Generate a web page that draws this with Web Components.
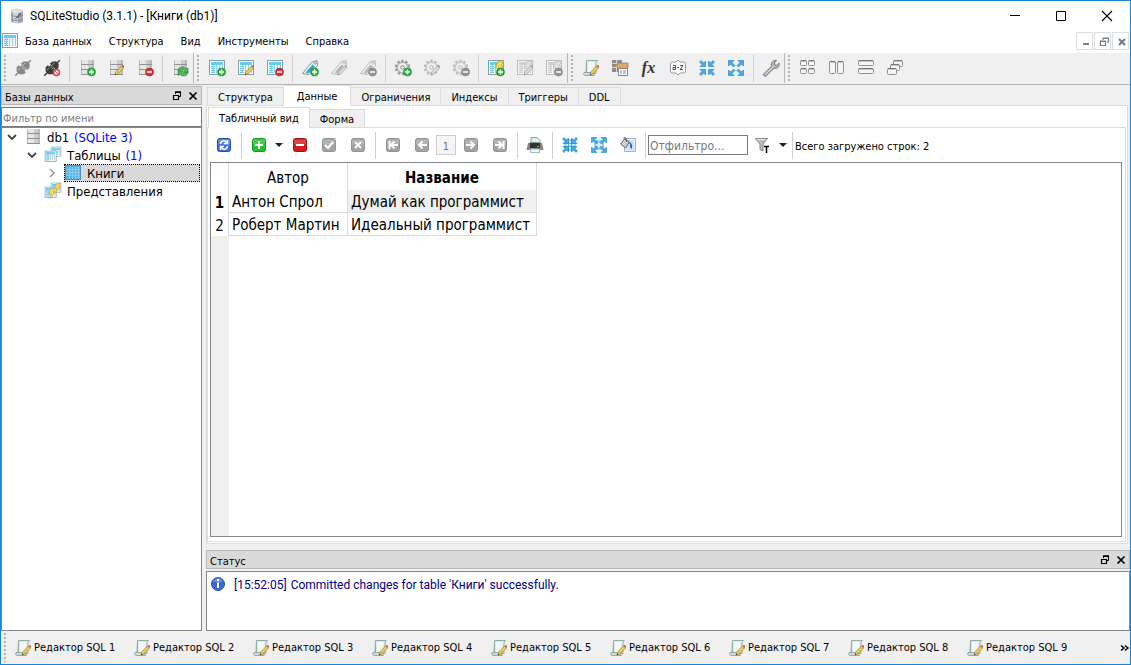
<!DOCTYPE html>
<html lang="ru">
<head>
<meta charset="utf-8">
<title>SQLiteStudio (3.1.1) - [Книги (db1)]</title>
<style>
  html, body { margin: 0; height: 100%; }
  body {
    --face: #f0f0f0;
    --line: #dcdcdc;
    --frame: #828790;
    font: 11px/14px "DejaVu Sans Condensed", "DejaVu Sans", sans-serif;
    color: #000;
    background: var(--face);
    overflow: hidden;
  }
</style>
</head>
<body>
<studio-window></studio-window>

<script>
/* ---------- base ---------- */
function define(name, html, init) {
  const template = document.createElement('template');
  template.innerHTML = html;
  customElements.define(name, class extends HTMLElement {
    constructor() {
      super();
      this.attachShadow({ mode: 'open' }).append(template.content.cloneNode(true));
    }
    connectedCallback() { if (init) init(this, this.shadowRoot); }
  });
}

/* ---------- icons, 18x18 grid ---------- */
const DISK = y => `<rect x="3" y="${y}" width="13" height="5" rx="1" fill="#b9b9b9"/><rect x="4" y="${y}" width="6" height="4" fill="#e6e6e6"/><rect x="10" y="${y}" width="4" height="4" fill="#cbcbcb"/><rect x="3" y="${y + 4}" width="13" height="1" fill="#929292"/>`;
const DB = DISK(1) + DISK(6) + DISK(11);
const TABLE = `<rect x="1.500" y="1.500" width="15" height="14" fill="#fff" stroke="#8aa0a4"/><rect x="3" y="3" width="12" height="11" fill="#e2f3fa"/><path d="M3 3h12v3H3z" fill="#62cdf8"/><path d="M3 3h4v11H3z" fill="#62cdf8"/><path d="M3 6.500h12M3 8.500h12M3 10.500h12M3 12.500h12" stroke="#fff" stroke-width=".7"/><path d="M5.500 6v8M8.500 6v8M11.500 6v8M14.500 6v8" stroke="#9cc6d9" stroke-width=".9"/>`;
const BOLT = `<path d="M11 2h6l-3 5h3l-8 9 2-7H8z" fill="#f6d955" stroke="#b99a35" stroke-width=".7"/>`;
const TAG = `<path d="M1.500 14.500 11 3l5-1.500.5 5L8 15.500z" fill="#f6f6f6" stroke="#8b9499"/><path d="m4.500 13.500 7-8 2.500 2-6.500 7z" fill="#34a5e0"/><circle cx="14" cy="4" r="1.200" fill="#fff" stroke="#777" stroke-width=".7"/>`;
const GEAR = `<circle cx="8.500" cy="8.500" r="6.500" fill="none" stroke="#9b9b9b" stroke-width="2.500" stroke-dasharray="2.400 1.684"/><circle cx="8.500" cy="8.500" r="5.500" fill="#dedede" stroke="#9a9a9a"/><circle cx="8.500" cy="8.500" r="3.500" fill="none" stroke="#f8f8f8"/><circle cx="8.500" cy="8.500" r="1.700" fill="#f7f7f7" stroke="#8f8f8f"/>`;
const SHEET = `<path d="M4.500 1.500h11q-1.500 1-1.500 3v10H4z" fill="#dcecea" stroke="#94aca9"/><path d="M6 3h6.500v10H6z" fill="#f0f9f7"/><path d="M4.500 2v10l-1 2" fill="none" stroke="#94aca9"/><path d="M3 13.500h9q-1 1.500.5 3H3q-2.500-1-1-3z" fill="#cadfdc" stroke="#819b98" stroke-width=".8"/>`;
const PLUG = c => `<g transform="rotate(-45 9 9)"><path d="M-2 9h22" stroke="${c}" stroke-width="1.500"/><path d="M2 7l3-3h3v10H5l-3-3zM10.500 4.500h3l3 2.500v4l-3 2.500h-3zM8 6h2v2H8zM8 10h2v2H8z" fill="${c}"/><path d="M4 7h3M11.500 7h3" stroke="#fff" opacity=".4"/></g>`;
const KEY = (a, b, g) => `<rect x="2.500" y="2.500" width="13" height="13" rx="2" fill="${a}" stroke="${b}"/><path d="M3 3.500h12v5H3z" fill="#fff" opacity=".18"/>${g}`;
const stroke = d => `<path d="${d}" fill="none" stroke="#fff" stroke-width="2"/>`;
const GRAY = d => KEY('#a3a3a3', '#929292', stroke(d));
const ARROWS = d => `<path d="${d}" fill="#45aceb" stroke="#2380c0" stroke-width=".6"/>`;
const IN = 'M1.500 3 3 1.500l2.500 2.500L7.500 2v5.500H2L4 5.500zM16.500 3 15 1.500 12.500 4l-2-2v5.500H16l-2-2zM1.500 15 3 16.500 5.500 14l2 2v-5.500H2l2 2zM16.500 15 15 16.500 12.500 14l-2 2v-5.500H16l-2 2z';
const OUT = 'M1.500 1.500H7L5 3.500l3 3L6.500 8l-3-3-2 2zM16.500 1.500H11l2 2-3 3L11.500 8l3-3 2 2zM1.500 16.500H7l-2-2 3-3L6.500 10l-3 3-2-2zM16.500 16.500H11l2-2-3-3 1.500-1.500 3 3 2-2z';
const PANE = (x, y, w, h) => `<rect x="${x}.5" y="${y}.5" width="${w}" height="${h}" rx="1" fill="#f5f5f5" stroke="#929292"/><path d="M${x + 1} ${y + 1}.5h${w - 1}" stroke="#c4c4c4"/><path d="M${x + 1} ${y}.5h${w - 1}" stroke="#777"/>`;
const STACK = `<g transform="translate(6 0) scale(.66)">${TABLE}</g><g transform="translate(0 4) scale(.74)">${TABLE}</g>`;
const ICONS = {
  app: `<path d="M3 4c0-3 12-3 12 0v10c0 3-12 3-12 0z" fill="#a3a9b4"/><path d="M5 2h5v14H5z" fill="#cdd1d8"/><ellipse cx="9" cy="4" rx="6" ry="2" fill="#dde0e5"/><path d="M3 8c2 2 10 2 12 0M3 12c2 2 10 2 12 0" fill="none" stroke="#8b919d"/><path d="m4 15 9-10c1 3-3 6-6 7z" fill="#5b6474"/>`,
  plug: PLUG('#868686'),
  unplug: PLUG('#3b3b3b') + `<circle cx="13.500" cy="13.500" r="3" fill="#fbe9e9" stroke="#d24545" stroke-width="1.500"/><path d="m11.500 11.500 4 4" stroke="#d24545"/>`,
  db: DB, table: TABLE,
  tableblue: `<rect x="1.500" y="1.500" width="15" height="14" fill="#5ab4e6" stroke="#4a8fb5"/><path d="M5.500 3v12M8.500 3v12M11.500 3v12M14.500 3v12M2 5.500h14M2 8.500h14M2 11.500h14" stroke="#8acdf0"/>`,
  tables: STACK,
  views: STACK + `<g transform="translate(5 0) scale(.7)">${BOLT}</g><g transform="translate(-1 5) scale(.72)">${BOLT}</g>`,
  tag: TAG, gear: GEAR, view: TABLE + BOLT, sheet: SHEET,
  dbrefresh: DB + `<path d="M7 11.500c0-4.500 7-4.500 8-1.500l2-1v4.500h-5l1.500-1.500c-1-2-3.500-1.500-3.500-.5zM17 13c0 5-7 5-8 2l-2 1.500V12h5l-1.500 1.500c1 2 3.500 1.500 3.500-.5z" fill="#4cc05a" stroke="#23832f" stroke-width=".6"/>`,
  history: `<path d="M1 1h10v12H1z" fill="#8d8d8d"/><path d="M1 4.500h10M1 8.500h10M5.500 1v12" stroke="#d4d4d4"/><path d="M5 5.500 9 4h8v5l-5 1.500-2-1.500-3 1z" fill="#e2a767" stroke="#a4713a" stroke-width=".7"/><rect x="7.500" y="9.500" width="9" height="7" fill="#fff" stroke="#888"/><path d="M9 12h2m1 0h3M9 14h2m1 0h3" stroke="#888"/>`,
  az: `<path d="M3.500 3H7l2-2 2 2h3.500q2 0 2 2v7q0 2-2 2H11l-2 2-2-2H3.500q-2 0-2-2V5q0-2 2-2z" fill="#fafafa" stroke="#999"/><path d="M4 6.500h2.500v4H4V8.500h2.500M8 8.500h2M11 6.500h3l-3 4h3" fill="none" stroke="#555"/>`,
  inward: ARROWS(IN), outward: ARROWS(OUT),
  gridin: `<path d="M4 4h10v10H4z" fill="#cfeefb" stroke="#47a9dc"/><path d="M4 7.500h10M4 10.500h10M7.500 4v10M10.500 4v10" stroke="#47a9dc"/>` + ARROWS(IN),
  gridout: `<path d="M5 5h8v8H5z" fill="#cfeefb" stroke="#47a9dc"/>` + ARROWS(OUT),
  wrench: `<path d="M1.500 15 9.500 7.500c-1-3 1-6.500 5-6L12.500 4l.5 2 2 .5L17 4c1 4-2 6-5 5.200L4 17c-1 1-3.500-1-2.500-2z" fill="#b4b4b4" stroke="#7b7b7b"/><path d="m3.500 15 8-7.500" stroke="#e6e6e6"/>`,
  tile: PANE(1, 1, 6, 5) + PANE(9, 1, 6, 5) + PANE(1, 9, 6, 5) + PANE(9, 9, 6, 5),
  cols: PANE(1, 2, 6, 12) + PANE(9, 2, 6, 12),
  rows: PANE(1, 1, 15, 5) + PANE(1, 9, 15, 5),
  cascade: PANE(7, 1, 9, 6) + PANE(4, 5, 9, 6) + PANE(1, 9, 9, 6),
  refresh: KEY('#3f6fe0', '#2450b5', `<path d="M5.500 8c.5-4 5-4 6-1.500M12.500 4v3.500H9M12.500 10c-.5 4-5 4-6 1.500M5.500 14v-3.500H9" fill="none" stroke="#fff" stroke-width="1.500"/>`),
  plus: KEY('#1fc32d', '#17962a', stroke('M9 5v8M5 9h8')),
  minus: KEY('#d01c1c', '#a01212', stroke('M5 9h8')),
  check: GRAY('m5 9 3 3 5-6'), cross: GRAY('m6 6 6 6M12 6l-6 6'),
  first: GRAY('M5.500 5v8M14 9H8M10.500 5.500 7 9l3.500 3.500'),
  prev: GRAY('M14 9H6M9.500 5.500 6 9l3.500 3.500'),
  next: GRAY('M4 9h8M8.500 5.500 12 9l-3.500 3.500'),
  last: GRAY('M12.500 5v8M4 9h6M7.500 5.500 11 9l-3.500 3.500'),
  print: `<path d="M5 8V1.500h6l3 3V8" fill="#dcefe2" stroke="#8aa595"/><path d="M2 7q7-2 14 0l1.500 7h-17z" fill="#858585"/><path d="M4 7h10v5H4z" fill="#333"/><path d="M11 10.500h2" stroke="#54d54c"/><path d="M4.500 13h9v3.500h-9z" fill="#eef6fc" stroke="#8fa6b8" stroke-width=".8"/>`,
  fill: `<path d="M5.500 2.500h11v13h-11z" fill="#e4f0f9" stroke="#9db6c6"/><path d="M7 4h8v10H7z" fill="#cfe3f3"/><path d="m1.500 8 4-5 5 3-4 6z" fill="#cdcdcd" stroke="#666"/><path d="M4.500 2q3-2 3 4" fill="none" stroke="#555"/><path d="M9 6q5 0 4 7-2.500-1-2-5z" fill="#2c62bd"/>`,
  funnel: `<path d="M1.500 2.500h12L9 8v7l-3-1.500V8z" fill="#bcbcbc" stroke="#868686"/><path d="M3 3.500h9" stroke="#eee"/><path d="M10 10.500h5M12.500 10.500V17" stroke="#000" stroke-width="1.500"/>`,
  info: `<circle cx="9" cy="9" r="6.500" fill="#3868d2" stroke="#2f56ad"/><path d="M4 6q5-6 10 0-5 3-10 0z" fill="#fff" opacity=".25"/><path d="M9 4v2M9 7.500V13" stroke="#fff" stroke-width="2"/>`,
  down: `<path d="M5 7h8l-4 4z" fill="#222"/>`,
  more: `<path d="m5 6.500 3 2.500-3 2.500M9 6.500l3 2.500-3 2.500" fill="none" stroke="#000" stroke-width="1.500"/>`,
  open: `<path d="m5 7 4 4 4-4" fill="none" stroke="#444" stroke-width="1.800"/>`,
  closed: `<path d="m7 5 4 4-4 4" fill="none" stroke="#999" stroke-width="1.600"/>`,
  float: `<path d="M7.500 7V5.500h5v4H11M7 5.500h6" fill="none" stroke="#000"/><path d="M5.500 8.500h5v4h-5zM5 8.500h6" fill="none" stroke="#000" stroke-width="1.200"/><path d="M7 5h6" stroke="#000" stroke-width="1.500"/>`,
  close: `<path d="m5.500 5.500 7 7M12.500 5.500l-7 7" stroke="#000" stroke-width="1.700"/>`,
  winmin: `<path d="M4 8.500h10" stroke="#000"/>`,
  winmax: `<path d="M4.500 4.500h9v9h-9z" fill="none" stroke="#000"/>`,
  winclose: `<path d="m4 4 10 10M14 4 4 14" stroke="#000" stroke-width="1.100"/>`,
  submin: `<path d="M6 11h6" stroke="#6f7f8f" stroke-width="2"/>`,
  subfloat: `<path d="M8 7V5.500h5.500V9H12M5.500 8.500h5v4h-5zM5 8h6M8 5h6" fill="none" stroke="#6f7f8f" stroke-width="1.200"/>`,
  subclose: `<path d="m6 6 6 6M12 6l-6 6" stroke="#6f7f8f" stroke-width="2.200"/>`
};
const BADGES = {
  add: `<circle cx="13.500" cy="13" r="4" fill="#2eb043" stroke="#1a8230" stroke-width=".6"/><path d="M13.500 10.500v5M11 13h5" stroke="#fff" stroke-width="1.500"/>`,
  del: `<circle cx="13.500" cy="13" r="4" fill="#d13338" stroke="#a01c22" stroke-width=".6"/><path d="M11 13h5" stroke="#fff" stroke-width="1.600"/>`,
  edit: `<path d="m8 16 .8-3 5.700-6 2 2-5.700 6z" fill="#f1cf54" stroke="#94772b" stroke-width=".7"/><path d="m14.500 7 1-1q2 0 1.500 2l-.5 1z" fill="#d65656"/><path d="m8 16 .4-1.400 1 .9z" fill="#222"/>`
};
define('ui-icon', `<style>
  :host { display: block; width: 18px; height: 18px; flex: none; }
  :host([off]) { filter: grayscale(1); opacity: .6; }
  svg { display: block; }
</style><svg width="18" height="18" viewBox="0 0 18 18" aria-hidden="true"></svg>`, (el, root) => {
  root.querySelector('svg').innerHTML = (ICONS[el.getAttribute('name')] || '') + (BADGES[el.getAttribute('badge')] || '');
});

/* ---------- buttons and bars ---------- */
define('tool-button', `<style>
  :host { display: block; width: 29px; flex: none; }
  :host([narrow]) { width: 12px; }
  button { width: 100%; height: 28px; padding: 0; border: 0; background: none; font: italic 700 16px/28px "Liberation Serif", serif; color: #333;
    display: flex; align-items: center; justify-content: center; }
</style><button type="button"><slot></slot></button>`, (el, root) => {
  const name = el.getAttribute('icon');
  root.querySelector('button').setAttribute('aria-label', el.getAttribute('label') || name);
  if (!name) return;
  const icon = document.createElement('ui-icon');
  icon.setAttribute('name', name);
  if (el.hasAttribute('badge')) icon.setAttribute('badge', el.getAttribute('badge'));
  icon.toggleAttribute('off', el.hasAttribute('off'));
  root.querySelector('slot').replaceWith(icon);
});
define('bar-gap', `<style>
  :host { display: block; width: 6px; height: 27px; flex: none; }
  i { display: block; width: 1px; height: 100%; margin-left: 3px; background: #cfcfcf; }
</style><i></i>`);
define('tool-bar', `<style>
  :host { display: flex; align-items: center; align-self: stretch; flex: none; position: relative; padding-left: 8px; box-shadow: inset -1px 0 #b8b8b8; }
  :host(:first-of-type) { padding-left: 7px; }
  :host([open]) { box-shadow: none; }
  :host::before { content: ""; position: absolute; left: 3px; top: 2px; bottom: 2px; width: 2px;
    background: repeating-linear-gradient(#b4b4b4 0 2px, transparent 2px 4px); }
</style><slot></slot>`);

define('title-bar', `<style>
  :host { display: flex; align-items: center; height: 29px; padding-left: 7px; background: #fff; font: 12px/16px Roboto, sans-serif; }
  span { flex: 1; margin-left: 4px; }
  button { width: 46px; height: 28px; padding: 0; border: 0; background: none; display: grid; place-items: center; }
</style><ui-icon name="app"></ui-icon><span><slot></slot></span>
<button aria-label="Свернуть"><ui-icon name="winmin"></ui-icon></button>
<button aria-label="Развернуть"><ui-icon name="winmax"></ui-icon></button>
<button aria-label="Закрыть"><ui-icon name="winclose"></ui-icon></button>`);

define('menu-bar', `<style>
  :host { display: flex; align-items: center; height: 22px; background: #fff; }
  nav { flex: 1; display: flex; gap: 1px; margin-left: -2px; }
  nav button { font: inherit; color: inherit; border: 0; background: none; padding: 2px 8px 0; }
  .sub { box-sizing: border-box; width: 17px; height: 18px; margin-right: 1px; padding: 0; border: 1px solid #dedede; background: #fff; display: grid; place-items: center; }
</style><ui-icon name="table"></ui-icon>
<nav><button>База данных</button><button>Структура</button><button>Вид</button><button>Инструменты</button><button>Справка</button></nav>
<button class="sub" aria-label="Свернуть вкладку"><ui-icon name="submin"></ui-icon></button>
<button class="sub" aria-label="Восстановить вкладку"><ui-icon name="subfloat"></ui-icon></button>
<button class="sub" aria-label="Закрыть вкладку"><ui-icon name="subclose"></ui-icon></button>`);

define('main-toolbar', `<style>
  :host { display: flex; box-sizing: border-box; height: 33px; padding-bottom: 1px; border-top: 1px solid #fff; border-bottom: 1px solid #b4b4b4; background: var(--face); }
</style>
<tool-bar>
  <tool-button icon="plug" label="Подключиться"></tool-button><tool-button icon="unplug" label="Отключиться"></tool-button><bar-gap></bar-gap>
  <tool-button icon="db" badge="add" label="Добавить базу"></tool-button><tool-button icon="db" badge="edit" label="Изменить базу"></tool-button><tool-button icon="db" badge="del" label="Удалить базу"></tool-button><bar-gap></bar-gap>
  <tool-button icon="dbrefresh" label="Обновить схемы"></tool-button>
</tool-bar>
<tool-bar>
  <tool-button icon="table" badge="add" label="Создать таблицу"></tool-button><tool-button icon="table" badge="edit" label="Изменить таблицу"></tool-button><tool-button icon="table" badge="del" label="Удалить таблицу"></tool-button><bar-gap></bar-gap>
  <tool-button icon="tag" badge="add" label="Создать индекс"></tool-button><tool-button icon="tag" badge="edit" off label="Изменить индекс"></tool-button><tool-button icon="tag" badge="del" off label="Удалить индекс"></tool-button><bar-gap></bar-gap>
  <tool-button icon="gear" badge="add" label="Создать триггер"></tool-button><tool-button icon="gear" badge="edit" off label="Изменить триггер"></tool-button><tool-button icon="gear" badge="del" off label="Удалить триггер"></tool-button><bar-gap></bar-gap>
  <tool-button icon="view" badge="add" label="Создать представление"></tool-button><tool-button icon="view" badge="edit" off label="Изменить представление"></tool-button><tool-button icon="view" badge="del" off label="Удалить представление"></tool-button>
</tool-bar>
<tool-bar>
  <tool-button icon="sheet" badge="edit" label="Редактор SQL"></tool-button><tool-button icon="history" label="История"></tool-button><tool-button label="Функции">fx</tool-button><tool-button icon="az" label="Сравнения"></tool-button><tool-button icon="inward" label="Импорт"></tool-button><tool-button icon="outward" label="Экспорт"></tool-button><bar-gap></bar-gap>
  <tool-button icon="wrench" label="Настройки"></tool-button>
</tool-bar>
<tool-bar open>
  <tool-button icon="tile" label="Мозаика"></tool-button><tool-button icon="cols" label="По вертикали"></tool-button><tool-button icon="rows" label="По горизонтали"></tool-button><tool-button icon="cascade" label="Каскад"></tool-button>
</tool-bar>`);

/* ---------- docks ---------- */
define('dock-panel', `<style>
  :host { display: flex; flex-direction: column; gap: 2px; min-height: 0; }
  header { box-sizing: border-box; height: 19px; flex: none; display: flex; align-items: center; padding: 0 1px 0 3px; border: 1px solid #b8b8b8; background: #d9d9d9; }
  span { flex: 1; padding-top: 4px; }
  button { width: 16px; padding: 0; border: 0; background: none; display: grid; place-items: center; }
  .body { flex: 1; min-height: 0; display: flex; flex-direction: column; }
</style><header><span></span><button aria-label="Открепить"><ui-icon name="float"></ui-icon></button><button aria-label="Закрыть панель"><ui-icon name="close"></ui-icon></button></header>
<div class="body"><slot></slot></div>`, (el, root) => {
  root.querySelector('span').textContent = el.getAttribute('heading');
});

define('tree-row', `<style>
  :host { display: flex; align-items: center; height: 18px; font-size: 13px; line-height: 18px; white-space: nowrap; }
  :host([level="1"]) { padding-left: 20px; }
  :host([level="2"]) { padding-left: 40px; }
  .mark { box-sizing: border-box; width: 22px; padding-left: 1px; flex: none; }
  .cell { display: flex; align-items: center; flex: 1; box-sizing: border-box; height: 18px; margin-right: 1px; gap: 5px; }
  :host([selected]) .cell { background: #d9d9d9; outline: 1px dotted #000; outline-offset: -1px; }
  span { padding-top: 2px; }
  em { margin-left: 1px; font-style: normal; color: #00f; }
</style><div class="mark"><ui-icon></ui-icon></div><div class="cell"><ui-icon class="kind"></ui-icon><span><slot></slot> <em></em></span></div>`, (el, root) => {
  el.setAttribute('role', 'treeitem');
  for (const [sel, attr] of [['.mark ui-icon', 'mark'], ['.kind', 'icon']]) {
    const fresh = document.createElement('ui-icon');
    fresh.setAttribute('name', el.getAttribute(attr) || '');
    root.querySelector(sel).replaceWith(fresh);
  }
  root.querySelector('em').textContent = el.getAttribute('note') || '';
});

define('database-tree', `<style>
  :host { flex: 1; display: flex; flex-direction: column; min-height: 0; }
  input { box-sizing: border-box; width: 100%; height: 20px; padding: 2px 1px 0; border: 1px solid #7a7a7a; background: #fff; font: inherit; outline: 0; }
  input::placeholder { color: #808080; opacity: 1; }
  .tree { flex: 1; border: 1px solid var(--frame); background: #fff; min-height: 0; }
</style>
<input type="text" placeholder="Фильтр по имени" aria-label="Фильтр по имени">
<div class="tree" role="tree">
  <tree-row mark="open" icon="db" note="(SQLite 3)">db1</tree-row>
  <tree-row level="1" mark="open" icon="tables" note="(1)">Таблицы</tree-row>
  <tree-row level="2" mark="closed" icon="tableblue" selected>Книги</tree-row>
  <tree-row level="1" icon="views">Представления</tree-row>
</div>`);

/* ---------- tabs ---------- */
define('tab-view', `<style>
  :host { display: flex; flex-direction: column; flex: 1; min-height: 0; --active-pad: 10px; }
  :host([wide]) { --active-pad: 13px; }
  .tabs { display: flex; align-items: flex-end; height: 20px; flex: none; padding-left: 1px; }
  .tabs button { box-sizing: border-box; height: 18px; padding: 2px 10px 0; border: 1px solid var(--line); border-width: 1px 1px 0 0; background: var(--face); font: inherit; color: inherit; white-space: nowrap; }
  .tabs button:first-child { border-left-width: 1px; }
  .tabs button[aria-selected=true] { height: 21px; margin-bottom: -1px; padding: 1px var(--active-pad) 0; background: #fff; position: relative; }
  .pane { flex: 1; min-height: 0; display: flex; flex-direction: column; padding: 1px 1px 1px 0; border: 1px solid var(--line); background: #fff; }
</style><div class="tabs" role="tablist"></div><div class="pane"><slot></slot></div>`, (el, root) => {
  const active = el.getAttribute('active');
  root.querySelector('.tabs').replaceChildren(...el.getAttribute('tabs').split('|').map(name => {
    const b = document.createElement('button');
    b.setAttribute('role', 'tab');
    b.setAttribute('aria-selected', String(name === active));
    b.textContent = name;
    return b;
  }));
});

define('grid-toolbar', `<style>
  :host { box-sizing: border-box; display: flex; align-items: center; height: 33px; flex: none; padding: 0 0 1px 1px; }
  input { box-sizing: border-box; height: 20px; font: inherit; outline: 0; }
  .page { width: 20px; margin: 0; padding: 2px 0 0; text-align: center; border: 1px solid #ccc; background: #f5f5f5; color: #777; }
  .filter { width: 100px; padding: 2px 1px 0; border: 1px solid #7a7a7a; background: #fff; font-size: 12px; }
  .filter::placeholder { color: #777; opacity: 1; }
  span { white-space: nowrap; padding-top: 3px; }
</style>
<tool-button icon="refresh" label="Обновить"></tool-button><bar-gap></bar-gap>
<tool-button icon="plus" label="Добавить строку"></tool-button><tool-button narrow icon="down" label="Варианты вставки"></tool-button><tool-button icon="minus" label="Удалить строку"></tool-button><tool-button icon="check" label="Подтвердить"></tool-button><tool-button icon="cross" label="Отменить"></tool-button><bar-gap></bar-gap>
<tool-button icon="first" label="Первая"></tool-button><tool-button icon="prev" label="Предыдущая"></tool-button><input class="page" value="1" aria-label="Страница"><tool-button icon="next" label="Следующая"></tool-button><tool-button icon="last" label="Последняя"></tool-button><bar-gap></bar-gap>
<tool-button icon="print" label="Печать"></tool-button><bar-gap></bar-gap>
<tool-button icon="gridin" label="Сжать столбцы"></tool-button><tool-button icon="gridout" label="Растянуть столбцы"></tool-button><tool-button icon="fill" label="Заливка"></tool-button><bar-gap></bar-gap>
<input class="filter" type="text" placeholder="Отфильтро..." aria-label="Отфильтровать"><tool-button icon="funnel" label="Фильтр"></tool-button><tool-button narrow icon="down" label="Варианты фильтра"></tool-button><bar-gap></bar-gap>
<span>Всего загружено строк: 2</span>`);

define('data-grid', `<style>
  :host { display: block; flex: 1; min-height: 0; margin: 0 2px 3px; border: 1px solid var(--frame); font-size: 15px; line-height: 20px;
    background: linear-gradient(90deg, var(--face) 18px, #fff 18px); }
  table { border-collapse: separate; border-spacing: 0; table-layout: fixed; width: 326px; background: #fff; }
  th, td { box-sizing: border-box; height: 23px; padding: 2px 0 0 3px; text-align: left; font-weight: 400; white-space: nowrap;
    border-right: 1px solid var(--line); border-bottom: 1px solid var(--line); }
  thead th { height: 27px; padding: 2px 0 0; text-align: center; border-bottom: 0; }
  th:first-child { padding: 2px 0 0; text-align: center; border-bottom: 0; }
  .now { font-weight: 700; }
  td.now { font-weight: 400; background: var(--face); }
</style>
<table>
  <colgroup><col style="width:18px"><col style="width:119px"><col style="width:189px"></colgroup>
  <thead><tr><th></th><th scope="col">Автор</th><th scope="col" class="now">Название</th></tr></thead>
  <tbody>
    <tr><th scope="row" class="now">1</th><td>Антон Спрол</td><td class="now">Думай как программист</td></tr>
    <tr><th scope="row">2</th><td>Роберт Мартин</td><td>Идеальный программист</td></tr>
  </tbody>
</table>`);

define('status-log', `<style>
  :host { box-sizing: border-box; flex: 1; display: block; padding: 2px; border: 1px solid var(--frame); background: #fff; color: #000080; font: 12px/18px Roboto, sans-serif; }
  ol { margin: 0; padding: 0; list-style: none; }
  li { display: flex; align-items: center; gap: 4px; }
  ui-icon { margin-right: 3px; }
  time, span { padding-top: 2px; }
</style><ol><li><ui-icon name="info"></ui-icon><time>[15:52:05]</time><span><slot></slot></span></li></ol>`);

define('task-bar', `<style>
  :host { display: flex; align-items: center; height: 33px; background: var(--face); }
  tool-bar { flex: 1; min-width: 0; overflow: hidden; }
  .more { width: 14px; padding: 0; border: 0; background: none; display: grid; place-items: center; }
  .task { box-sizing: border-box; width: 119px; height: 24px; flex: none; padding: 1px 0 0 6px; border: 0; background: none; font: inherit; color: inherit; display: flex; align-items: center; gap: 2px; white-space: nowrap; }
</style><tool-bar open></tool-bar><button class="more" aria-label="Ещё"><ui-icon name="more"></ui-icon></button>`, (el, root) => {
  root.querySelector('tool-bar').innerHTML = Array.from({ length: 9 }, (_, i) =>
    `<button class="task"><ui-icon name="sheet" badge="edit"></ui-icon>Редактор SQL ${i + 1}</button>`).join('');
});

define('studio-window', `<style>
  :host { box-sizing: border-box; display: flex; flex-direction: column; height: 100vh; border: 1px solid #1883d7; background: var(--face); }
  main { flex: 1; min-height: 0; display: grid; grid-template-columns: 201px minmax(0, 1fr); column-gap: 4px; }
  .left { padding-top: 1px; }
  .right { display: flex; flex-direction: column; gap: 6px; min-height: 0; }
  .doc { margin-right: 2px; }
  .log { height: 81px; flex: none; }
</style>
<title-bar>SQLiteStudio (3.1.1) - [Книги (db1)]</title-bar>
<menu-bar></menu-bar>
<main-toolbar></main-toolbar>
<main>
  <dock-panel class="left" heading="Базы данных"><database-tree></database-tree></dock-panel>
  <div class="right">
    <tab-view class="doc" wide tabs="Структура|Данные|Ограничения|Индексы|Триггеры|DDL" active="Данные">
      <tab-view tabs="Табличный вид|Форма" active="Табличный вид">
        <grid-toolbar></grid-toolbar>
        <data-grid></data-grid>
      </tab-view>
    </tab-view>
    <dock-panel class="log" heading="Статус"><status-log>Committed changes for table 'Книги' successfully.</status-log></dock-panel>
  </div>
</main>
<task-bar></task-bar>`);
</script>
</body>
</html>
